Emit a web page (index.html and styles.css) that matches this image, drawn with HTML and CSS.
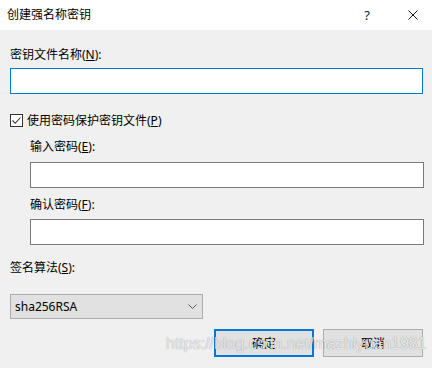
FILE: index.html
```html
<!DOCTYPE html>
<html lang="zh-CN">
<head>
<meta charset="UTF-8" />
<title>创建强名称密钥</title>
<link rel="stylesheet" href="styles.css">
</head>
<body>

<div class="dialog">
  <div class="titlebar">
    <span class="title">创建强名称密钥</span>
    <span class="help">?</span>
    <svg class="close" width="10" height="10" viewBox="0 0 10 10">
      <path d="M0.5 0.5 L9.5 9.5 M9.5 0.5 L0.5 9.5" stroke="#111" stroke-width="1" fill="none" />
    </svg>
  </div>

  <div class="content">
    <div class="lbl lbl-key">密钥文件名称(<u>N</u>):</div>
    <div class="textbox focused"></div>

    <div class="check-row">
      <span class="checkbox">
        <svg width="11" height="11" viewBox="0 0 11 11">
          <path d="M1.5 5.5 L4.2 8.3 L9.5 2.5" stroke="#333" stroke-width="1.1" fill="none" />
        </svg>
      </span>
      <span>使用密码保护密钥文件(<u>P</u>)</span>
    </div>

    <div class="pwd-group">
      <div class="lbl lbl-pwd">输入密码(<u>E</u>):</div>
      <div class="textbox pwd-box"></div>
      <div class="lbl lbl-confirm">确认密码(<u>F</u>):</div>
      <div class="textbox confirm-box"></div>
    </div>

    <div class="lbl lbl-algo">签名算法(<u>S</u>):</div>
    <div class="combo">
      <span>sha256RSA</span>
      <svg width="9" height="5" viewBox="0 0 9 5">
        <path d="M0.5 0.5 L4.5 4.5 L8.5 0.5" stroke="#555" stroke-width="1" fill="none" />
      </svg>
    </div>

    <div class="buttons">
      <button class="btn btn-default">确定</button>
      <button class="btn">取消</button>
    </div>
  </div>

  <div class="watermark">https://blog.csdn.net/mazhiyuan1981</div>
</div>

</body>
</html>
```

FILE: styles.css
```css
body {
  margin: 0;
  background: #f0f0f0;
  font-family: "Noto Sans", "Noto Sans CJK SC", sans-serif;
  font-size: 12px;
  color: #000;
}
.dialog {
  position: relative;
  width: 432px;
  height: 368px;
  overflow: hidden;
}
.titlebar {
  display: flex;
  align-items: center;
  height: 30px;
  background: #fff;
  padding-left: 7px;
}
.title {
  flex: 1;
  line-height: 30px;
}
.help {
  font-size: 13px;
  color: #222;
  margin-right: 38px;
}
.close {
  margin-right: 14px;
}
.content {
  padding: 0 9px 0 10px;
}
.lbl {
  height: 16px;
  line-height: 16px;
}
.lbl-key { margin-top: 17px; }
.textbox {
  box-sizing: border-box;
  height: 26px;
  background: #fff;
  border: 1px solid #7a7a7a;
}
.textbox.focused {
  margin-top: 5px;
  border-color: #0078d7;
}
.check-row {
  display: flex;
  align-items: center;
  height: 16px;
  margin-top: 18px;
}
.checkbox {
  box-sizing: border-box;
  width: 13px;
  height: 13px;
  border: 1px solid #333;
  background: #fff;
  margin-right: 4px;
  display: flex;
  align-items: center;
  justify-content: center;
}
.pwd-group {
  padding-left: 20px;
  margin-right: -1px;
}
.lbl-pwd { margin-top: 11px; }
.pwd-box { margin-top: 7px; }
.lbl-confirm { margin-top: 9px; }
.confirm-box { margin-top: 6px; }
.lbl-algo { margin-top: 15px; }
.combo {
  box-sizing: border-box;
  display: flex;
  align-items: center;
  justify-content: space-between;
  width: 193px;
  height: 25px;
  margin-top: 18px;
  padding: 0 5px 0 4px;
  background: #e1e1e1;
  border: 1px solid #adadad;
}
.buttons {
  display: flex;
  justify-content: flex-end;
  gap: 9px;
  margin-top: 10px;
}
.btn {
  box-sizing: border-box;
  width: 100px;
  height: 28px;
  background: #e1e1e1;
  border: 1px solid #adadad;
  font-family: inherit;
  font-size: 12px;
  color: #000;
  padding: 0;
}
.btn-default {
  border: 2px solid #0078d7;
}
.watermark {
  position: absolute;
  left: 166px;
  top: 335px;
  font-family: "Liberation Sans", sans-serif;
  font-size: 16px;
  color: rgba(255, 255, 255, 0.8);
  text-shadow: 0 0 1px rgba(0, 0, 0, 0.45);
  white-space: nowrap;
}
```
